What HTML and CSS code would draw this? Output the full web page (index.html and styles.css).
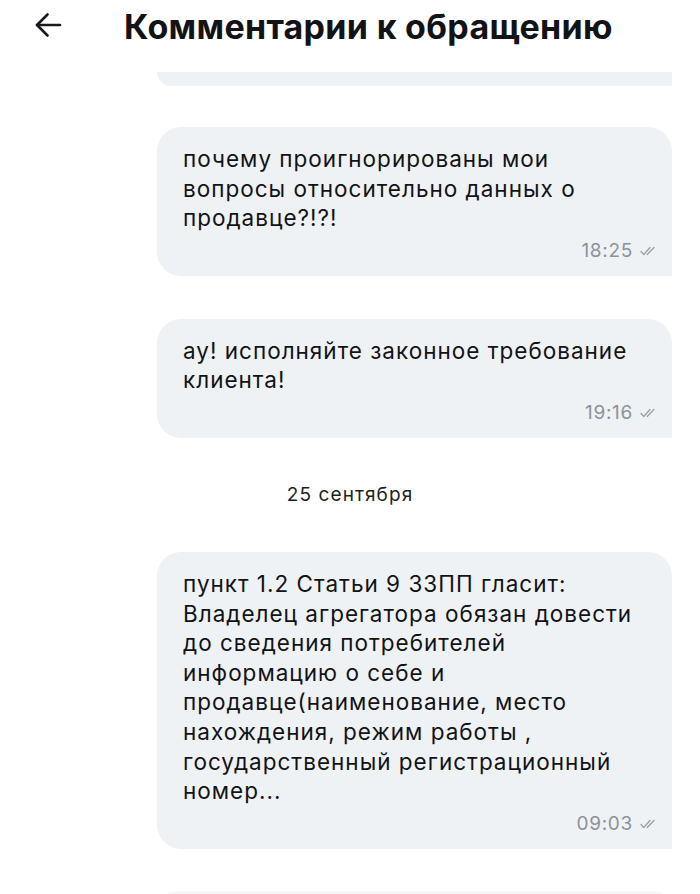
FILE: index.html
```html
<!DOCTYPE html>
<html lang="ru">
<head>
<meta charset="utf-8">
<title>Комментарии к обращению</title>
<link rel="stylesheet" href="styles.css">
</head>
<body>
<header class="header">
  <button class="back" aria-label="Назад">
    <svg width="28" height="28" viewBox="0 0 28 28" fill="none" stroke="#16181c" stroke-width="2.6" stroke-linecap="round" stroke-linejoin="round">
      <path d="M26 14H3"/>
      <path d="M13.5 3.5L3 14l10.5 10.5"/>
    </svg>
  </button>
  <h1 class="title">Комментарии к обращению</h1>
</header>
<main class="chat">
  <div class="bubble partial"></div>

  <div class="bubble">
    <p class="text">почему проигнорированы мои<br>вопросы относительно данных о<br>продавце?!?!</p>
    <div class="meta"><span class="time">18:25</span><svg class="check" width="16" height="10" viewBox="0 0 16 10" fill="none" stroke="#9aa0a8" stroke-width="1.3" stroke-linecap="round" stroke-linejoin="round"><path d="M1 5.5l2.8 3L10 1.5"/><path d="M7.2 8.5L14 1.5"/></svg></div>
  </div>

  <div class="bubble">
    <p class="text">ау! исполняйте законное требование<br>клиента!</p>
    <div class="meta"><span class="time">19:16</span><svg class="check" width="16" height="10" viewBox="0 0 16 10" fill="none" stroke="#9aa0a8" stroke-width="1.3" stroke-linecap="round" stroke-linejoin="round"><path d="M1 5.5l2.8 3L10 1.5"/><path d="M7.2 8.5L14 1.5"/></svg></div>
  </div>

  <div class="date">25 сентября</div>

  <div class="bubble">
    <p class="text">пункт 1.2 Статьи 9 ЗЗПП гласит:<br>Владелец агрегатора обязан довести<br>до сведения потребителей<br>информацию о себе и<br>продавце(наименование, место<br>нахождения, режим работы ,<br>государственный регистрационный<br>номер...</p>
    <div class="meta"><span class="time">09:03</span><svg class="check" width="16" height="10" viewBox="0 0 16 10" fill="none" stroke="#9aa0a8" stroke-width="1.3" stroke-linecap="round" stroke-linejoin="round"><path d="M1 5.5l2.8 3L10 1.5"/><path d="M7.2 8.5L14 1.5"/></svg></div>
  </div>

  <div class="bubble next"></div>
</main>
</body>
</html>
```

FILE: styles.css
```css
* {
  box-sizing: border-box;
}

html, body {
  margin: 0;
  padding: 0;
  background: #ffffff;
  overflow: hidden;
}

body {
  font-family: Inter, "Noto Sans", sans-serif;
  color: #16181c;
  width: 700px;
  height: 894px;
}

.header {
  height: 72px;
  display: flex;
  align-items: center;
  padding: 0 0 2px 34px;
  background: #ffffff;
}

.back {
  width: 28px;
  height: 28px;
  padding: 0;
  border: 0;
  background: none;
  display: flex;
  align-items: center;
  justify-content: center;
  margin-top: -20px;
}

.title {
  margin: 0 0 0 62px;
  margin-top: -16px;
  font-size: 34px;
  font-weight: 700;
  letter-spacing: 0.3px;
  line-height: 40px;
  color: #121316;
}

.chat {
  display: flex;
  flex-direction: column;
  align-items: flex-end;
  padding-right: 28px;
}

.bubble {
  width: 515px;
  background: #eff2f5;
  border-radius: 24px 24px 0 24px;
  padding: 17px 26px 13px 26px;
  margin-bottom: 43px;
}

.bubble.partial {
  height: 14px;
  padding: 0;
  border-radius: 0 0 0 24px;
  margin-bottom: 41px;
}

.bubble.next {
  height: 40px;
  margin-top: -1px;
  background: #f5f7f9;
}

.text {
  margin: 0;
  font-size: 22.5px;
  letter-spacing: 1px;
  line-height: 29.6px;
  color: #121316;
  white-space: nowrap;
}

.meta {
  display: flex;
  justify-content: flex-end;
  align-items: center;
  gap: 7px;
  height: 24px;
  margin-top: 6px;
  margin-right: -10px;
}

.time {
  font-size: 19px;
  letter-spacing: 0.7px;
  color: #8c929a;
  line-height: 24px;
}

.check {
  display: block;
  margin-top: 1px;
}

.date {
  align-self: center;
  margin: 2px 0 45px 28px;
  font-size: 19px;
  letter-spacing: 1.1px;
  line-height: 24px;
  color: #1c1e22;
}
```
